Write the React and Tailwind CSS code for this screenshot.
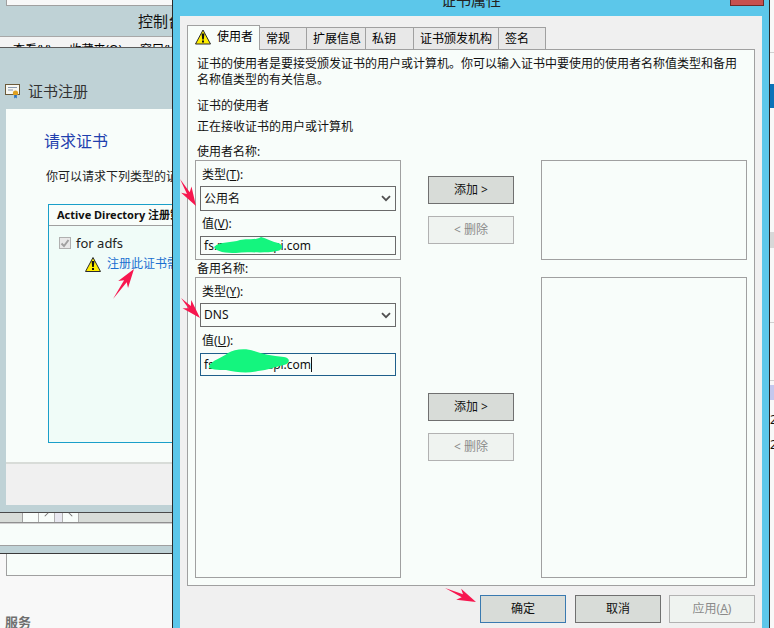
import React from "react";

const arrows = [
  [[180, 179], [196, 206]],
  [[181, 298], [200, 318]],
  [[113, 299], [134, 269]],
  [[445, 588], [476, 602]],
];

function arrowPoints([tail, tip]) {
  const dx = tip[0] - tail[0];
  const dy = tip[1] - tail[1];
  const len = Math.hypot(dx, dy);
  const ux = dx / len;
  const uy = dy / len;
  const at = (along, side) => `${tip[0] - ux * along - uy * side},${tip[1] - uy * along + ux * side}`;
  return [tail[0] + "," + tail[1], at(15, 1.6), at(19, 6), tip[0] + "," + tip[1], at(19, -6), at(15, -1.6)].join(" ");
}

function WarningIcon({ className }) {
  return (
    <svg viewBox="0 0 16 16" className={className}>
      <path d="M8 1 L15.5 15 H0.5 Z" fill="#ffee00" stroke="#2a2a30" strokeWidth="1" strokeLinejoin="round" />
      <path d="M6.6 4.6 H9.4 L8.8 10.6 H7.2 Z M7 11.4 H9 V13.4 H7 Z" fill="#111" />
    </svg>
  );
}

function CertIcon() {
  return (
    <svg viewBox="0 0 16 16" className="h-[16px] w-[16px] shrink-0">
      <rect x="0.5" y="1.5" width="14" height="10" fill="#f7f7f2" stroke="#6b5a3a" />
      <path d="M3 4.5 H12 M3 7 H8" stroke="#8a9ab0" />
      <circle cx="10.5" cy="10" r="2.6" fill="#e0a020" />
      <path d="M9.2 12 V15.5 L10.5 14.5 L11.8 15.5 V12" fill="#2a70c0" />
    </svg>
  );
}

function ChevronDown() {
  return (
    <svg viewBox="0 0 10 7" className="h-[7px] w-[10px]">
      <path d="M1 1.2 L5 5.2 L9 1.2" fill="none" stroke="#505050" strokeWidth="1.8" />
    </svg>
  );
}

function Btn({ children, disabled, primary, className = "" }) {
  let tone = "border-[#707070] bg-[#d8dcd8] text-[#111]";
  if (disabled) tone = "border-[#b2b2b2] bg-[#eff3f0] text-[#8a8a8a]";
  if (primary) tone = "border-[#3a7ab0] bg-[#d8dcd8] text-[#111]";
  return (
    <div className={`flex h-[28px] w-[86px] items-center justify-center border text-[12px] ${tone} ${className}`}>
      {children}
    </div>
  );
}

function FieldLabel({ children, className = "" }) {
  return <div className={`ml-[2px] h-[16px] pt-[1px] text-[12px] leading-[16px] ${className}`}>{children}</div>;
}

function SelectBox({ children, className }) {
  return (
    <div className={`flex items-center justify-between border border-[#6a6a6a] bg-[#f8fdfa] pl-[3px] pr-[4px] text-[12px] ${className}`}>
      <span>{children}</span>
      <ChevronDown />
    </div>
  );
}

function Tab({ children, className }) {
  return (
    <div className={`flex h-[22px] items-center border border-b-0 border-l-0 border-[#a0a0a0] bg-[#e8e8e8] pl-[6px] text-[12px] ${className}`}>
      {children}
    </div>
  );
}

function BackgroundWindow() {
  return (
    <div className="flex min-w-0 flex-1 flex-col">
      <div className="h-[6px] shrink-0 bg-[#bfd2d6] pl-[6px]">
        <div className="h-[6px] border-b border-l border-[#a0a0a0] bg-[#f8f8f8]" />
      </div>
      <div className="flex h-[30px] shrink-0 items-center bg-[#bfd2d6] pl-[138px] text-[15px] text-[#111]">控制台</div>
      <div className="flex h-[12px] shrink-0 gap-[18px] overflow-hidden border-y border-b-[#5a5a5a] border-t-[#a8a8a8] bg-[#f4f4f4] pl-[13px] pt-[5px] text-[12px] leading-[16px]">
        <span className="shrink-0">查看(V)</span>
        <span className="shrink-0">收藏夹(O)</span>
        <span className="shrink-0">窗口(W)</span>
      </div>
      <div className="flex h-[464px] shrink-0 flex-col bg-[#bfd2d6] pl-[6px]">
        <div className="-ml-[1px] flex h-[61px] shrink-0 items-center gap-[7px] pt-[25px] text-[15px] text-[#333]">
          <CertIcon />
          <span>证书注册</span>
        </div>
        <div className="flex h-[355px] shrink-0 flex-col border-b-2 border-[#d8dcd8] bg-[#f8fdfa] pl-[38px]">
          <div className="mt-[21px] text-[16px] leading-[22px] text-[#1f3fae]">请求证书</div>
          <div className="ml-[2px] mt-[17px] whitespace-nowrap text-[12px] leading-[16px] text-[#222]">你可以请求下列类型的证书</div>
          <div className="ml-[4px] mt-[19px] flex h-[239px] flex-col border border-[#1a9fc9] bg-[#f0fcf8]">
            <div className="h-[21px] whitespace-nowrap border-b border-[#a0a0a0] bg-[#f8fdfa] pl-[8px] text-[11px] font-bold leading-[20px] text-[#111]">Active Directory 注册策略</div>
            <div className="ml-[10px] mt-[10px] flex items-center gap-[5px] text-[13px] leading-[14px] text-[#222]">
              <div className="flex h-[12px] w-[12px] items-center justify-center border border-[#b0b0b0] bg-[#e8e8e8]">
                <svg viewBox="0 0 10 10" className="h-[10px] w-[10px]">
                  <path d="M1.5 5.5 L4 8 L8.5 2" fill="none" stroke="#a0a0a0" strokeWidth="2" />
                </svg>
              </div>
              for adfs
            </div>
            <div className="ml-[36px] mt-[5px] flex items-center gap-[6px] whitespace-nowrap text-[12px] text-[#1a6fd0]">
              <WarningIcon className="h-[17px] w-[16px] shrink-0" />
              注册此证书需要更多信息
            </div>
          </div>
        </div>
        <div className="h-[41px] shrink-0 bg-[#f0f0f0]" />
        <div className="flex-1" />
      </div>
      <div className="flex h-[11px] shrink-0 border-y border-t-[#4a4a4a] border-b-[#909090] bg-[#d8dcd8]">
        <div className="w-[23px] border-r border-[#a0a0a0]" />
        <div className="w-[15px] bg-[#f8fdfa]" />
        <div className="flex w-[17px] items-start justify-center border-x border-[#b0b0b0] bg-[#f8fdfa]">
          <div className="mt-[1px] h-[1px] w-[5px] -rotate-45 bg-[#707070]" />
        </div>
        <div className="w-[7px] bg-[#e8e8f0]" />
        <div className="flex w-[17px] items-start justify-center border-x border-[#b0b0b0] bg-[#f8fdfa]">
          <div className="mt-[1px] h-[1px] w-[5px] rotate-45 bg-[#707070]" />
        </div>
      </div>
      <div className="h-[23px] shrink-0 border-y border-t-[#d0d0d0] border-b-[#a0a0a0] bg-[#f8fdfa]" />
      <div className="h-[8px] shrink-0 border-b border-[#3a3a3a] bg-[#bfd2d6]" />
      <div className="flex shrink-0 flex-col bg-[#f8f8f8]">
        <div className="ml-[6px] h-[22px] border-b border-l border-[#a0a0a0] bg-[#f8fdfa]" />
        <div className="ml-[5px] mt-[38px] text-[13px] font-bold leading-[16px] text-[#707070]">服务</div>
      </div>
    </div>
  );
}

function RightStrip() {
  return (
    <div className="flex h-[628px] w-[4px] shrink-0 flex-col bg-[#f8f8f8]">
      <div className="mt-[52px] h-[1px] bg-[#d0d0d0]" />
      <div className="mt-[31px] h-[24px] bg-[#0a72b8]" />
      <div className="mt-[124px] h-[16px] bg-[#d8d8d8]" />
      <div className="mt-[74px] h-[1px] bg-[#d0d0d0]" />
      <div className="mt-[57px] h-[1px] bg-[#d0d0d0]" />
      <div className="mt-[4px] h-[15px] bg-[#c4c8ee]" />
      <div className="mt-[13px] h-[14px] overflow-hidden text-[12px] leading-[14px] text-[#111]">2</div>
      <div className="mt-[11px] h-[14px] overflow-hidden text-[12px] leading-[14px] text-[#111]">2</div>
    </div>
  );
}

function CertDialog() {
  return (
    <div className="absolute left-[172px] top-[-16px] flex h-[660px] w-[598px] flex-col border-x border-[#2a2a2a] bg-[#5cc7ea] px-[7px]">
      <div className="relative flex h-[32px] shrink-0 items-center justify-center text-[15px] text-[#222]">
        <span>证书属性</span>
        <div className="absolute right-[-2px] top-0 h-[22px] w-[34px] border border-[#6d2b2b] bg-[#c75050]" />
      </div>
      <div className="flex flex-1 flex-col bg-[#f0f0f0] px-[7px] pt-[9px]">
        <div className="flex h-[24px] items-end">
          <div className="z-10 -mb-[1px] flex h-[25px] w-[73px] items-center gap-[6px] border border-b-0 border-[#a0a0a0] bg-[#f8fdfa] pb-[2px] pl-[7px] text-[12px]">
            <WarningIcon className="h-[16px] w-[16px] shrink-0" />
            使用者
          </div>
          <Tab className="w-[47px] pl-[5px]">常规</Tab>
          <Tab className="w-[59px]">扩展信息</Tab>
          <Tab className="w-[48px]">私钥</Tab>
          <Tab className="w-[85px]">证书颁发机构</Tab>
          <Tab className="w-[47px]">签名</Tab>
        </div>
        <div className="flex h-[537px] flex-col border border-[#a0a0a0] bg-[#f8fdfa] px-[7px] pt-[6px] text-[#111]">
          <div className="ml-[2px] text-[12px] leading-[16px]">
            证书的使用者是要接受颁发证书的用户或计算机。你可以输入证书中要使用的使用者名称值类型和备用
            <br />
            名称值类型的有关信息。
          </div>
          <div className="ml-[2px] mt-[10px] text-[12px] leading-[16px]">证书的使用者</div>
          <div className="ml-[2px] mt-[5px] text-[12px] leading-[16px]">正在接收证书的用户或计算机</div>
          <div className="ml-[2px] mt-[9px] text-[12px] leading-[16px]">使用者名称:</div>
          <div className="flex h-[100px] gap-[27px]">
            <div className="w-[206px] border border-[#a0a0a0] px-[4px] pt-[5px]">
              <FieldLabel>类型(<u>T</u>):</FieldLabel>
              <SelectBox className="mt-[4px] h-[25px]">公用名</SelectBox>
              <FieldLabel className="mt-[4px]">值(<u>V</u>):</FieldLabel>
              <div className="mt-[5px] h-[19px] border border-[#6a6a6a] pl-[3px] text-[12px] leading-[17px]">fs.mxxxxxxapi.com</div>
            </div>
            <div className="flex w-[86px] flex-col gap-[12px] pt-[16px]">
              <Btn>添加 &gt;</Btn>
              <Btn disabled>&lt; 删除</Btn>
            </div>
            <div className="w-[206px] border border-[#a0a0a0]" />
          </div>
          <div className="ml-[2px] mt-[1px] text-[12px] leading-[16px]">备用名称:</div>
          <div className="flex h-[301px] gap-[27px]">
            <div className="w-[206px] border border-[#a0a0a0] px-[4px] pt-[5px]">
              <FieldLabel>类型(<u>Y</u>):</FieldLabel>
              <SelectBox className="mt-[4px] h-[24px]">DNS</SelectBox>
              <FieldLabel className="mt-[5px]">值(<u>U</u>):</FieldLabel>
              <div className="mt-[5px] flex h-[23px] items-center border border-[#1f5f8b] pl-[3px] text-[12px]">
                fs.mxxxxxxapi.com
                <span className="h-[15px] w-[1px] bg-[#111]" />
              </div>
            </div>
            <div className="flex w-[86px] flex-col gap-[12px] pt-[116px]">
              <Btn>添加 &gt;</Btn>
              <Btn disabled>&lt; 删除</Btn>
            </div>
            <div className="w-[206px] border border-[#a0a0a0]" />
          </div>
        </div>
        <div className="mt-[9px] flex justify-end gap-[9px]">
          <Btn primary>确定</Btn>
          <Btn>取消</Btn>
          <Btn disabled className="-ml-[1px]">应用(<u>A</u>)</Btn>
        </div>
      </div>
    </div>
  );
}

export default function App() {
  return (
    <div className="relative flex h-[628px] w-[774px] overflow-hidden bg-[#f8f8f8] font-['Noto_Sans','Noto_Sans_CJK_SC',sans-serif]">
      <BackgroundWindow />
      <RightStrip />
      <CertDialog />
      {/* hand-drawn marks on top of the screenshot */}
      <svg viewBox="0 0 774 628" className="pointer-events-none absolute inset-0 h-[628px] w-[774px]">
        <path d="M214 247 C220 241 232 243 240 240 C248 238 254 241 261 237 C266 238 272 242 278 243 C284 245 283 250 277 251 C262 254 248 251 236 253 C226 253 216 252 214 247 Z" fill="#14f57e" />
        <path d="M209 366 C212 360 222 358 228 353 C234 349 246 348 254 351 C262 354 272 356 284 357 C291 358 290 364 284 365 C274 367 268 370 258 371 C246 374 236 372 226 370 C218 370 208 370 209 366 Z" fill="#14f57e" />
        {arrows.map((a, i) => (
          <polygon key={i} points={arrowPoints(a)} fill="#f7174f" />
        ))}
      </svg>
    </div>
  );
}
